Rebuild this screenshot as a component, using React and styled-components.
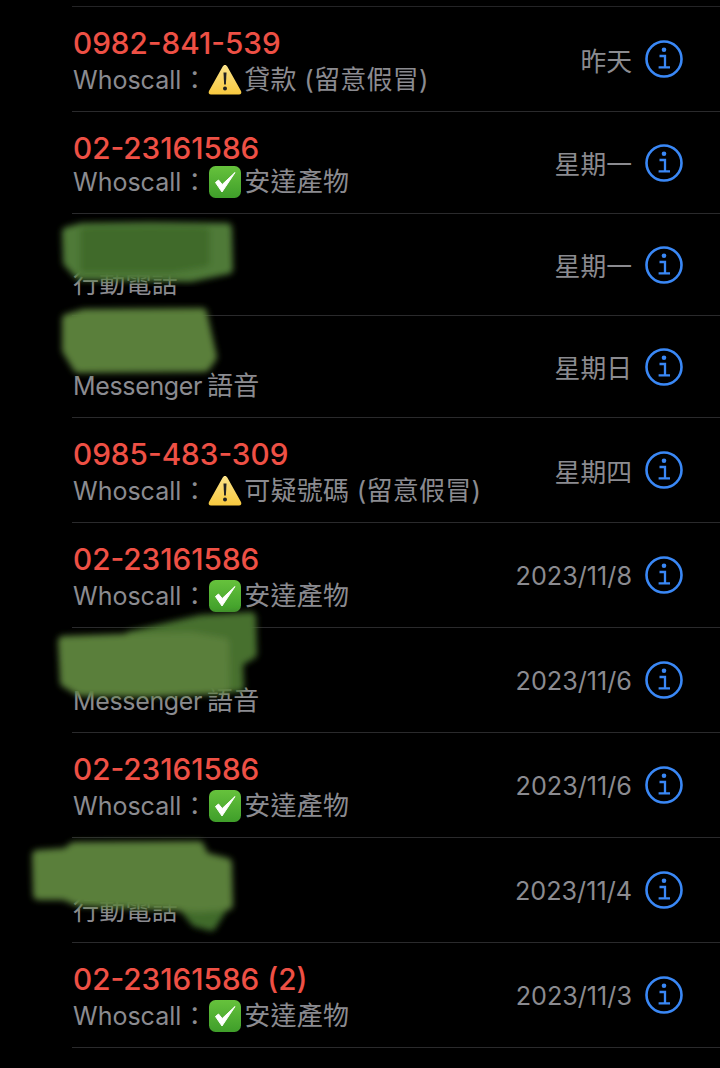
import React from 'react';
import styled, { createGlobalStyle } from 'styled-components';

const Global = createGlobalStyle`
  html, body { margin: 0; padding: 0; background: #000; }
  body { font-family: Inter, "Noto Sans CJK TC", sans-serif; }
`;

const Page = styled.div`
  width: 720px;
  height: 1068px;
  overflow: hidden;
  background: #000;
  padding-top: 6px;
  box-sizing: border-box;
`;

const List = styled.ul`
  list-style: none;
  margin: 0 0 0 72px;
  padding: 0;
  border-top: 1px solid #242426;
`;

const Row = styled.li`
  position: relative;
  box-sizing: border-box;
  height: ${(p) => (p.$tall ? 105 : 102)}px;
  border-bottom: 1px solid #2a2a2c;
  display: flex;
  align-items: center;
  padding: 0 37px 0 1px;
`;

const Texts = styled.div`
  flex: 1;
  min-width: 0;
  padding-top: 4px;
  display: flex;
  flex-direction: column;
  gap: ${(p) => (p.$tall ? 4 : 1)}px;
`;

const Number = styled.div`
  font-size: 29.7px;
  line-height: 34px;
  height: 34px;
  font-weight: 500;
  color: #ee5045;
  white-space: nowrap;
`;

const Sub = styled.div`
  display: flex;
  align-items: center;
  font-size: 25px;
  line-height: 32px;
  height: 32px;
  color: #8b8b90;
  white-space: nowrap;
`;

const Colon = styled.span`
  margin: 0 1px 0 1px;
`;

const Label = styled.span`
  font-size: 26px;
  letter-spacing: 0.25px;
  margin-left: ${(p) => p.$gap || 0}px;
`;

const Service = styled.span`
  letter-spacing: -0.35px;
`;

const Emoji = styled.svg`
  width: 34px;
  height: 34px;
  flex: none;
  margin-right: 2px;
`;

const When = styled.div`
  font-size: ${(p) => (p.$date ? 25.2 : 25.8)}px;
  padding-top: ${(p) => (p.$date ? 2 : 0)}px;
  color: #8b8b90;
  white-space: nowrap;
  margin-right: 13px;
`;

const Info = styled.svg`
  width: 38px;
  height: 38px;
  flex: none;
`;

const Smudge = styled.svg`
  position: absolute;
  z-index: 1;
  left: ${(p) => p.$x}px;
  top: ${(p) => p.$y}px;
  overflow: visible;
`;

const WarnIcon = () => (
  <Emoji viewBox="0 0 34 34">
    <defs>
      <linearGradient id="warn" x1="0" y1="0" x2="0" y2="1">
        <stop offset="0" stopColor="#fbe38a" />
        <stop offset="1" stopColor="#f8c93f" />
      </linearGradient>
    </defs>
    <path d="M17 2 C18 2 18.8 2.6 19.3 3.5 L33 28 C33.9 29.8 33 31.5 31 31.5 L3 31.5 C1 31.5 0.1 29.8 1 28 L14.7 3.5 C15.2 2.6 16 2 17 2 Z" fill="url(#warn)" />
    <path d="M15.5 9.5 h3 l-0.6 12 h-1.8 Z" fill="#222" />
    <circle cx="17" cy="25.5" r="2" fill="#222" />
  </Emoji>
);

const CheckIcon = () => (
  <Emoji viewBox="0 0 34 34">
    <defs>
      <linearGradient id="chk" x1="0" y1="0" x2="0" y2="1">
        <stop offset="0" stopColor="#66c23c" />
        <stop offset="1" stopColor="#3f9e2a" />
      </linearGradient>
    </defs>
    <rect x="1" y="1" width="32" height="32" rx="6.5" fill="url(#chk)" />
    <path d="M7.5 17.5 L14 27 L27 7.5 L14.2 19.5 L10.5 15 Z" fill="#fff" stroke="#fff" strokeWidth="1" strokeLinejoin="round" />
  </Emoji>
);

const InfoIcon = () => (
  <Info viewBox="0 0 38 38" fill="none">
    <circle cx="19" cy="19" r="17.5" stroke="#3a88f6" strokeWidth="2.6" />
    <circle cx="19" cy="9.8" r="2.3" fill="#3a88f6" />
    <path d="M14.5 16 H20 V27 M13.6 27.4 H25" stroke="#3a88f6" strokeWidth="2.3" />
  </Info>
);

// scribbles are drawn in page coordinates, rowTop moves them into the row
const Blob = ({ rowTop, x, y, w, h, shapes }) => (
  <Smudge $x={x - 72} $y={y - rowTop} width={w} height={h} viewBox={`${x} ${y} ${w} ${h}`}>
    <defs>
      <filter id={`blur-${rowTop}`} x="-10%" y="-20%" width="120%" height="140%">
        <feGaussianBlur stdDeviation="3" />
      </filter>
    </defs>
    <g filter={`url(#blur-${rowTop})`}>
      {shapes.map(([points, fill], i) => (
        <polygon key={i} points={points} fill={fill} stroke={fill} strokeWidth="10" strokeLinejoin="round" />
      ))}
    </g>
  </Smudge>
);

const calls = [
  { tall: true, number: '0982-841-539', icon: 'warn', label: '貸款 (留意假冒)', when: '昨天' },
  { number: '02-23161586', icon: 'check', label: '安達產物', when: '星期一' },
  {
    service: '',
    label: '行動電話',
    when: '星期一',
    blob: {
      rowTop: 214, x: 55, y: 215, w: 190, h: 75,
      shapes: [
        ['67,232 82,228 150,227 227,228 228,269 190,277 80,275 68,262', '#4f7a37'],
        ['85,232 150,231 205,232 205,262 170,268 85,268', '#3f6a2b'],
      ],
    },
  },
  {
    service: 'Messenger',
    label: '語音',
    when: '星期日',
    blob: {
      rowTop: 316, x: 50, y: 300, w: 180, h: 80,
      shapes: [['67,319 84,314 202,313 212,357 205,367 78,368 67,350', '#5a7f3a']],
    },
  },
  { tall: true, number: '0985-483-309', icon: 'warn', label: '可疑號碼 (留意假冒)', when: '星期四' },
  { tall: true, number: '02-23161586', icon: 'check', label: '安達產物', when: '2023/11/8' },
  {
    tall: true,
    service: 'Messenger',
    label: '語音',
    when: '2023/11/6',
    blob: {
      rowTop: 628, x: 50, y: 605, w: 215, h: 100,
      shapes: [
        ['130,636 200,620 251,617 252,654 238,662 239,687 180,689 130,660', '#47702f'],
        ['63,641 120,639 190,637 224,643 225,689 150,692 80,691 65,682', '#5a7f3a'],
      ],
    },
  },
  { tall: true, number: '02-23161586', icon: 'check', label: '安達產物', when: '2023/11/6' },
  {
    tall: true,
    service: '',
    label: '行動電話',
    when: '2023/11/4',
    blob: {
      rowTop: 838, x: 25, y: 835, w: 215, h: 105,
      shapes: [
        ['182,905 224,905 211,926 196,922', '#3f6a2c'],
        ['37,855 66,853 74,847 199,846 204,857 227,863 228,905 200,907 78,901 64,895 38,895', '#5a7f3a'],
      ],
    },
  },
  { tall: true, number: '02-23161586 (2)', icon: 'check', label: '安達產物', when: '2023/11/3' },
];

const App = () => (
  <Page>
    <Global />
    <List>
      {calls.map((c, i) => (
        <Row key={i} $tall={c.tall}>
          <Texts $tall={c.tall}>
            <Number>{c.number}</Number>
            {c.icon ? (
              <Sub>
                Whoscall<Colon>：</Colon>
                {c.icon === 'warn' ? <WarnIcon /> : <CheckIcon />}
                <Label>{c.label}</Label>
              </Sub>
            ) : (
              <Sub>
                <Service>{c.service}</Service>
                <Label $gap={c.service ? 5 : 0}>{c.label}</Label>
              </Sub>
            )}
          </Texts>
          <When $date={c.when.includes('/')}>{c.when}</When>
          <InfoIcon />
          {c.blob && <Blob {...c.blob} />}
        </Row>
      ))}
    </List>
  </Page>
);

export default App;
